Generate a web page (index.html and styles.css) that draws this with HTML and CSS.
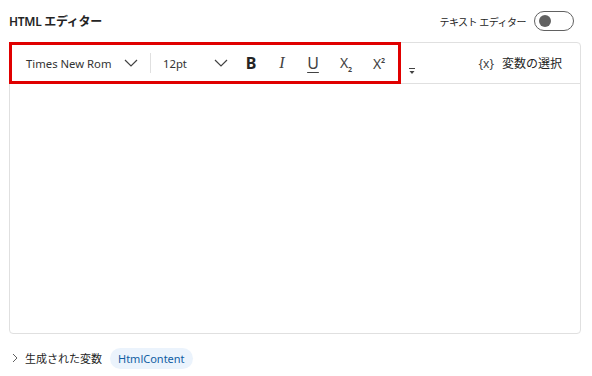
FILE: index.html
```html
<html lang="ja">
 <head>
  <meta charset="UTF-8">
  <title>HTML エディター</title>
  <link rel="stylesheet" href="styles.css">
 </head>
 <body>
  <div class="panel">
   <div class="header">
    <h1>HTML エディター</h1>
    <div class="switch-wrap">
     <span class="switch-label">テキスト エディター</span>
     <div class="switch"><div class="knob"></div></div>
    </div>
   </div>
   <div class="editor">
    <div class="toolbar">
     <div class="tool-group">
      <div class="select font-select">
       <span>Times New Rom</span>
       <svg width="14" height="8" viewBox="0 0 14 8"><path d="M1 1l6 6 6-6" fill="none" stroke="#424242" stroke-width="1.2"/></svg>
      </div>
      <div class="divider"></div>
      <div class="select size-select">
       <span>12pt</span>
       <svg width="14" height="8" viewBox="0 0 14 8"><path d="M1 1l6 6 6-6" fill="none" stroke="#424242" stroke-width="1.2"/></svg>
      </div>
      <div class="tool bold">B</div>
      <div class="tool italic">I</div>
      <div class="tool underline">U</div>
      <div class="tool script">X<sub>2</sub></div>
      <div class="tool script">X<sup>2</sup></div>
     </div>
     <div class="more">
      <svg width="8" height="8" viewBox="0 0 8 8"><path d="M1 1.5h6" stroke="#424242" stroke-width="1"/><path d="M1.5 4h5L4 7z" fill="#424242"/></svg>
     </div>
     <div class="vars">
      <span class="vars-icon">{x}</span>
      <span>変数の選択</span>
     </div>
    </div>
    <div class="content"></div>
   </div>
   <div class="footer">
    <svg width="8" height="10" viewBox="0 0 8 10"><path d="M2 1l4 4-4 4" fill="none" stroke="#616161" stroke-width="1"/></svg>
    <span class="footer-label">生成された変数</span>
    <span class="pill">HtmlContent</span>
   </div>
  </div>
 </body>
</html>
```

FILE: styles.css
```css
* {
    margin: 0;
    padding: 0;
    box-sizing: border-box;
    font-family: 'Noto Sans', 'Noto Sans CJK JP', sans-serif;
}

body {
    background: white;
    color: #242424;
}

.panel {
    width: 592px;
    height: 376px;
    padding: 0 11px 0 9px;
}

.header {
    height: 42px;
    display: flex;
    align-items: center;
    justify-content: space-between;
    padding-right: 7px;
}

.header h1 {
    font-size: 12px;
    font-weight: 600;
    letter-spacing: -0.3px;
}

.switch-wrap {
    display: flex;
    align-items: center;
    gap: 8px;
}

.switch-label {
    font-size: 10px;
    letter-spacing: -0.5px;
}

.switch {
    width: 40px;
    height: 20px;
    border: 1px solid #616161;
    border-radius: 10px;
    padding: 3px 4px;
}

.knob {
    width: 12px;
    height: 12px;
    border-radius: 50%;
    background: #616161;
}

.editor {
    height: 292px;
    border: 1px solid #e0e0e0;
    border-radius: 4px;
    display: flex;
    flex-direction: column;
}

.toolbar {
    height: 41px;
    display: flex;
    border-bottom: 1px solid #e0e0e0;
}

.tool-group {
    width: 392px;
    height: 42px;
    margin: -1px 0 0 -1px;
    border: 3px solid #e00000;
    display: flex;
    align-items: center;
    padding-left: 14px;
}

.select {
    display: flex;
    align-items: center;
    justify-content: space-between;
    font-size: 11.3px;
    color: #333;
}

.font-select {
    width: 112px;
}

.divider {
    width: 1px;
    height: 20px;
    background: #e0e0e0;
    margin: 0 12px;
}

.size-select {
    width: 65px;
}

.tool {
    font-size: 16px;
    color: #424242;
    margin-left: 15px;
    width: 16px;
    text-align: center;
}

.bold {
    font-weight: 700;
    color: #242424;
    margin-left: 15px;
}

.italic {
    font-family: 'Liberation Serif', serif;
    font-style: italic;
}

.underline {
    text-decoration: underline;
    text-underline-offset: 3px;
}

.script {
    font-size: 14px;
    width: 16px;
    margin-left: 17px;
}

.script sub,
.script sup {
    font-size: 7px;
    font-weight: 700;
}

.more {
    display: flex;
    align-items: flex-end;
    padding: 0 0 8px 7px;
}

.vars {
    margin-left: auto;
    display: flex;
    align-items: center;
    gap: 8px;
    font-size: 12px;
    padding-right: 18px;
}

.vars-icon {
    color: #424242;
}

.content {
    flex: 1;
}

.footer {
    display: flex;
    align-items: center;
    margin-top: 12px;
    height: 24px;
    padding-left: 2px;
}

.footer-label {
    font-size: 11px;
    margin-left: 6px;
}

.pill {
    font-size: 11px;
    color: #115ea3;
    background: #ebf3fc;
    border-radius: 12px;
    padding: 3px 8px;
    margin-left: 8px;
}
```
